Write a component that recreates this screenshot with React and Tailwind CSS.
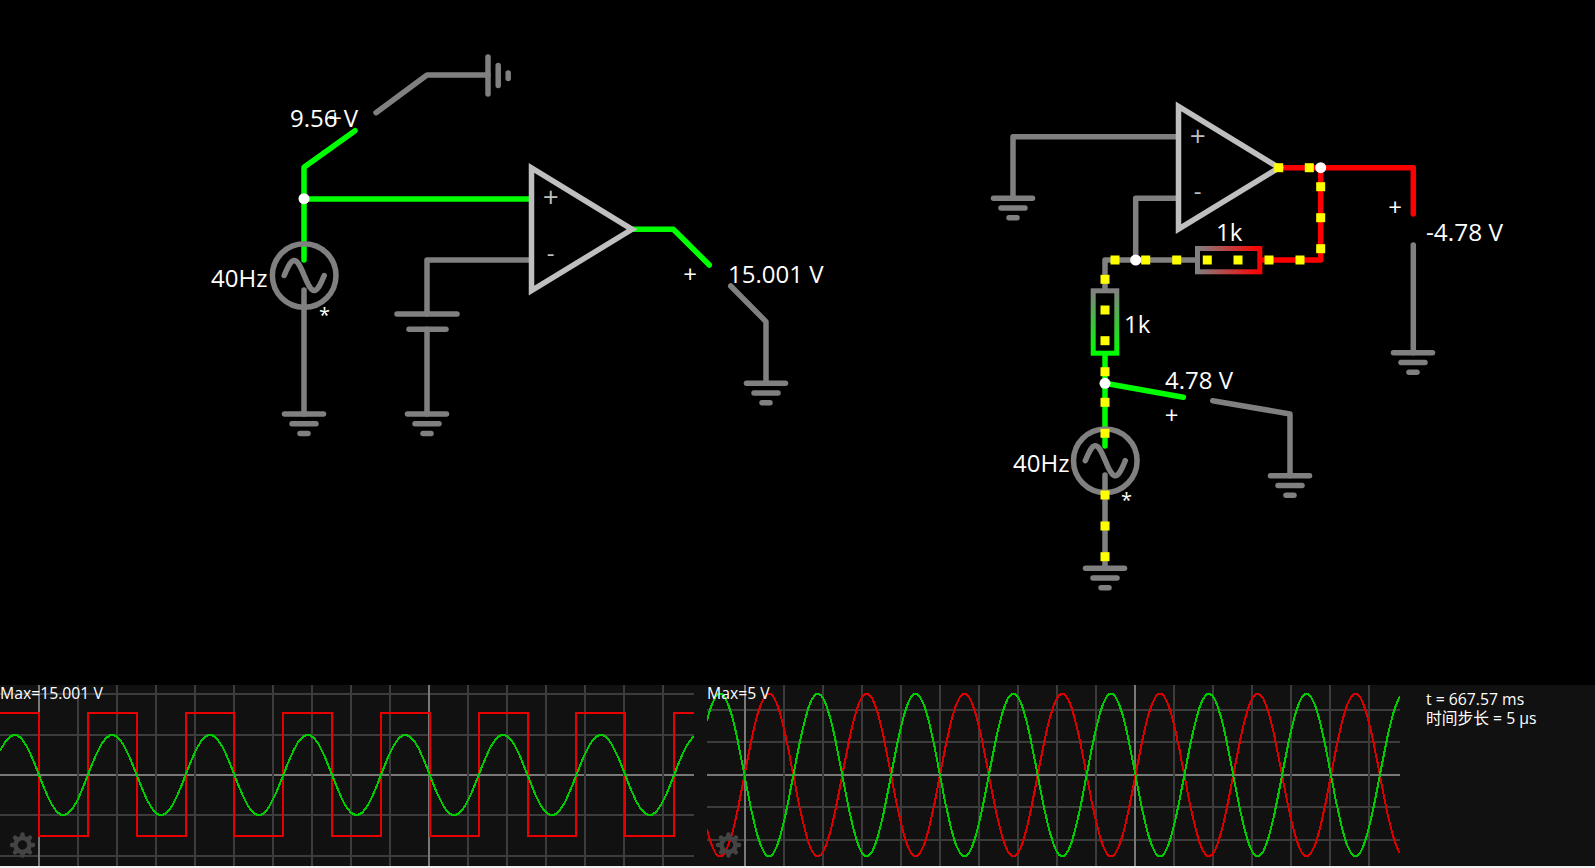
const GRAY = "#808080";
const GREEN = "#00ff00";
const RED = "#ff0000";
const OPAMP = "#bfbfbf";
const FONT = "'Open Sans', 'Noto Sans CJK SC', sans-serif";

function W({ d, c = GRAY, w = 5.5 }) {
  return <path d={d} fill="none" stroke={c} strokeWidth={w} strokeLinecap="round" strokeLinejoin="round" />;
}

function Ground({ x, y }) {
  return (
    <g>
      <W d={`M${x - 19.5} ${y}H${x + 19.5}`} />
      <W d={`M${x - 12} ${y + 9.8}H${x + 12}`} />
      <W d={`M${x - 4} ${y + 19.5}H${x + 4}`} />
    </g>
  );
}

function sinePath(cx, cy) {
  const pts = [];
  for (let i = 0; i <= 40; i++) {
    const t = i / 40;
    const x = cx - 20 + 40 * t;
    const y = cy - 15 * Math.sin(2 * Math.PI * t);
    pts.push(`${x.toFixed(1)} ${y.toFixed(1)}`);
  }
  return "M" + pts.join("L");
}

function Source({ x, y }) {
  return (
    <g>
      <circle cx={x} cy={y} r={31.8} fill="none" stroke={GRAY} strokeWidth={5.5} />
      <W d={sinePath(x, y)} />
    </g>
  );
}

function OpAmp({ x, y }) {
  return (
    <g>
      <path d={`M${x} ${y - 61.3}V${y + 61.3}L${x + 100.5} ${y}Z`} fill="none" stroke={OPAMP} strokeWidth={5.5} strokeMiterlimit={10} />
      <text x={x + 19.2} y={y - 22} fontSize={28} fill={OPAMP} textAnchor="middle" fontFamily={FONT}>+</text>
      <text x={x + 19} y={y + 32.5} fontSize={24} fill={OPAMP} textAnchor="middle" fontFamily={FONT}>-</text>
    </g>
  );
}

function Label({ x, y, children, size = 24 }) {
  return <text x={x} y={y} fontSize={size} fill="#ffffff" fontFamily={FONT}>{children}</text>;
}

function Plus({ x, y }) {
  return <text x={x} y={y + 8.6} fontSize={24} fill="#ffffff" textAnchor="middle" fontFamily={FONT}>+</text>;
}

function Dot({ x, y }) {
  return <circle cx={x} cy={y} r={5.5} fill="#ffffff" />;
}

const YELLOW = [
  [1115, 260], [1145.7, 260], [1176.7, 260], [1207.3, 260], [1238, 260], [1269, 260], [1300, 260],
  [1105, 279.3], [1105, 310], [1105, 340.7], [1105, 371.7], [1105, 402.3], [1105, 433.3],
  [1105, 495], [1105, 526], [1105, 556.7],
  [1278.7, 167.7], [1309.3, 167.7],
  [1320.7, 186.7], [1320.7, 217.7], [1320.7, 248.7],
];

function Circuit() {
  return (
    <svg width="1595" height="685" viewBox="0 0 1595 685" className="block">
      <defs>
        <linearGradient id="r1" gradientUnits="userSpaceOnUse" x1="1197" y1="0" x2="1260" y2="0">
          <stop offset="0" stopColor={GRAY} />
          <stop offset="1" stopColor={RED} />
        </linearGradient>
        <linearGradient id="r2" gradientUnits="userSpaceOnUse" x1="0" y1="291" x2="0" y2="353">
          <stop offset="0" stopColor={GRAY} />
          <stop offset="1" stopColor={GREEN} />
        </linearGradient>
      </defs>

      {/* left circuit */}
      <W d="M376 112.7L427 75H488" />
      <W d="M488 57V94" />
      <W d="M498.2 65.5V85.5" />
      <W d="M508.2 73V78.5" />
      <W d="M355 130.7L304 167.3V260" c={GREEN} />
      <W d="M304 199H531" c={GREEN} />
      <Source x={304.2} y={275.5} />
      <W d="M304 290V414" />
      <Ground x={304} y={414} />
      <W d="M531 260H427V314" />
      <W d="M397 314H457" />
      <W d="M409 329.3H446" />
      <W d="M427 329.3V414" />
      <Ground x={427} y={414} />
      <W d="M632 229.3H673.3L709.3 265" c={GREEN} />
      <OpAmp x={531.5} y={229.3} />
      <W d="M730.7 286L766 321.7V383.3" />
      <Ground x={766} y={383.3} />
      <Dot x={304} y={198.7} />
      <Label x={290} y={127.3}>9.56 V</Label>
      <Plus x={335} y={118} />
      <Label x={211} y={286.7}>40Hz</Label>
      <Label x={319} y={322} size={20}>*</Label>
      <Plus x={690} y={274} />
      <Label x={728} y={282.7}>15.001 V</Label>

      {/* right circuit */}
      <W d="M1013 198.3V136.7H1178" />
      <Ground x={1013} y={198.3} />
      <W d="M1178 198.3H1135.7V260" />
      <W d="M1105 288V260H1196" />
      <W d="M1279 167.7H1413.3V214" c={RED} />
      <W d="M1320.7 167.7V260H1262" c={RED} />
      <OpAmp x={1178.5} y={167.7} />
      <W d="M1413.3 245V352.7" />
      <Ground x={1413} y={352.7} />
      <rect x="1197.5" y="248.5" width="62.3" height="23.3" fill="none" stroke="url(#r1)" strokeWidth={5} />
      <rect x="1093.2" y="290.8" width="23.6" height="62.4" fill="none" stroke="url(#r2)" strokeWidth={5} />
      <W d="M1105 355V446" c={GREEN} />
      <W d="M1105 383.3L1183.3 397.3" c={GREEN} />
      <W d="M1212.7 400.7L1290 414V475.7" />
      <Ground x={1290} y={475.7} />
      <Source x={1105.3} y={460.7} />
      <W d="M1105 475V568.3" />
      <Ground x={1105} y={568.3} />
      {YELLOW.map(([x, y], i) => (
        <rect key={i} x={x - 4.5} y={y - 4.5} width={9} height={9} fill="#ffff00" />
      ))}
      <Dot x={1135.7} y={260} />
      <Dot x={1320.7} y={167.7} />
      <Dot x={1105} y={383.3} />
      <Plus x={1395} y={207.3} />
      <Label x={1426} y={240.7} size={24.4}>-4.78 V</Label>
      <Label x={1216} y={240.7}>1k</Label>
      <Label x={1124} y={333.3}>1k</Label>
      <Label x={1165} y={389.3}>4.78 V</Label>
      <Plus x={1171.7} y={415} />
      <Label x={1013} y={471.7}>40Hz</Label>
      <Label x={1121} y={507} size={20}>*</Label>
    </svg>
  );
}

function Gear({ x, y }) {
  const teeth = [0, 45, 90, 135, 180, 225, 270, 315];
  return (
    <g fill="none" stroke="#444444">
      <circle cx={x} cy={y} r={7} strokeWidth={4.5} />
      {teeth.map((a) => (
        <path key={a} d={`M${x} ${y - 8}V${y - 10.5}`} strokeWidth={4.5} strokeLinecap="round" transform={`rotate(${a} ${x} ${y})`} />
      ))}
    </g>
  );
}

function wave(x0, x1, fn) {
  const pts = [];
  for (let x = x0; x <= x1; x += 1) pts.push(`${x} ${Math.round(fn(x))}`);
  return "M" + pts.join("L");
}

function squarePath(x0, x1, first, half) {
  let high = true;
  let d = `M${x0} 28`;
  let x = first;
  while (x < x1) {
    d += `H${Math.round(x)}`;
    high = !high;
    d += `V${high ? 28 : 151}`;
    x += half;
  }
  d += `H${x1}`;
  return d;
}

function GridLines({ xs, ys, major, x0, x1 }) {
  return (
    <g shapeRendering="crispEdges">
      {ys.map((y) => (
        <path key={y} d={`M${x0} ${y}H${x1}`} stroke={y === 90 ? "#787878" : "#3c3c3c"} strokeWidth={2} />
      ))}
      {xs.map((x) => (
        <path key={x} d={`M${x} 0V181`} stroke={major.includes(x) ? "#787878" : "#3c3c3c"} strokeWidth={2} />
      ))}
    </g>
  );
}

function ScopeLabel({ children }) {
  return (
    <span className="absolute left-0 top-0 whitespace-nowrap text-[15.75px] leading-[17px] text-white font-['Open_Sans',sans-serif]">
      {children}
    </span>
  );
}

function Scope1() {
  const xs = [];
  for (let i = 0; i < 17; i++) xs.push(39 + i * 39);
  const ys = [9, 50, 90, 130, 171];
  const sine = wave(0, 694, (x) => 90 + 40 * Math.sin((2 * Math.PI * (x - 39)) / 97.7));
  return (
    <div className="relative h-[181px] w-[694px] shrink-0">
      <svg width="694" height="181" viewBox="0 0 694 181" className="block">
        <GridLines xs={xs} ys={ys} major={[39, 429]} x0={0} x1={694} />
        <path d={squarePath(0, 694, 39, 48.85)} fill="none" stroke="#e80000" strokeWidth={2} shapeRendering="crispEdges" />
        <path d={sine} fill="none" stroke="#00cc00" strokeWidth={2} shapeRendering="crispEdges" />
        <Gear x={22.5} y={160} />
      </svg>
      <ScopeLabel>Max=15.001 V</ScopeLabel>
    </div>
  );
}

function Scope2() {
  const xs = [];
  for (let i = -1; i < 17; i++) xs.push(38 + i * 39);
  const ys = [25, 57, 90, 122, 155];
  const g = (x) => 90 + 81.3 * Math.sin((2 * Math.PI * (x - 37.5)) / 97.75);
  const r = (x) => 90 - 81.3 * Math.sin((2 * Math.PI * (x - 37.5)) / 97.75);
  return (
    <div className="relative h-[181px] w-[693px] shrink-0">
      <svg width="693" height="181" viewBox="0 0 693 181" className="block">
        <GridLines xs={xs} ys={ys} major={[38, 428]} x0={0} x1={693} />
        <path d={wave(0, 693, r)} fill="none" stroke="#d80000" strokeWidth={2} shapeRendering="crispEdges" />
        <path d={wave(0, 693, g)} fill="none" stroke="#00cc00" strokeWidth={2} shapeRendering="crispEdges" />
        <Gear x={21.5} y={160} />
      </svg>
      <ScopeLabel>Max=5 V</ScopeLabel>
    </div>
  );
}

export default function App() {
  return (
    <div className="flex h-[868px] w-[1595px] flex-col overflow-hidden bg-[#f0f0f0]">
      <div className="h-[685px] bg-black">
        <Circuit />
      </div>
      <div className="flex h-[181px] bg-[#111111]">
        <Scope1 />
        <div className="w-[13px] shrink-0" />
        <Scope2 />
        <div className="ml-[26px] pt-[5px] text-[15.75px] leading-[19px] text-white font-['Open_Sans','Noto_Sans_CJK_SC',sans-serif]">
          <div>t = 667.57 ms</div>
          <div>时间步长 = 5 μs</div>
        </div>
      </div>
    </div>
  );
}
